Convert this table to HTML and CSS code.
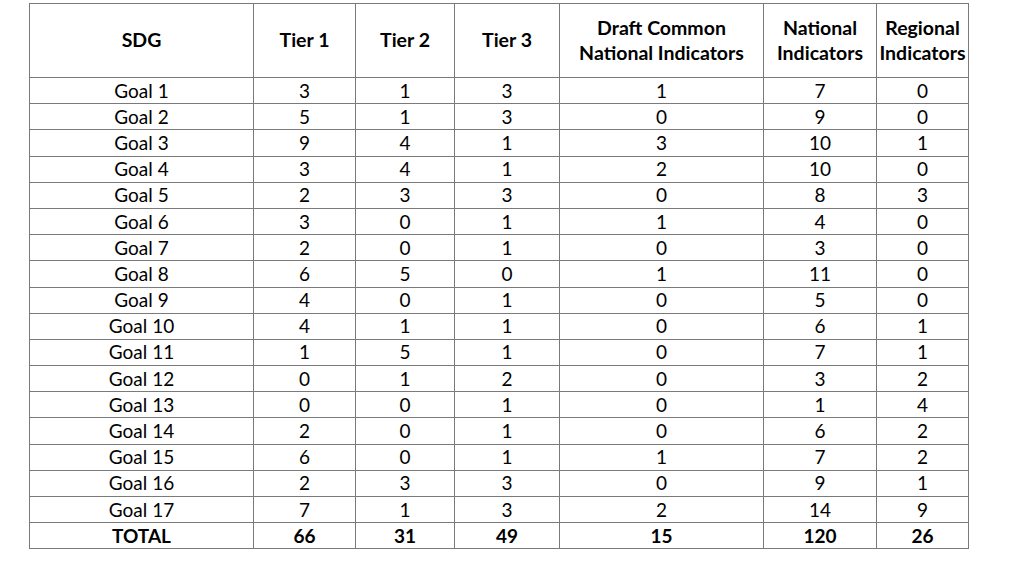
FILE: index.html
```html
<!DOCTYPE html>
<html>
<head>
<meta charset="utf-8">
<link rel="stylesheet" href="styles.css">
</head>
<body>
<table class="sdg">
<colgroup>
<col class="c1"><col class="c2"><col class="c3"><col class="c4"><col class="c5"><col class="c6"><col class="c7">
</colgroup>
<thead>
<tr class="head"><th>SDG</th><th>Tier 1</th><th>Tier 2</th><th>Tier 3</th><th>Draft Common<br>National Indicators</th><th>National<br>Indicators</th><th>Regional<br>Indicators</th></tr>
</thead>
<tbody>
<tr><td>Goal 1</td><td>3</td><td>1</td><td>3</td><td>1</td><td>7</td><td>0</td></tr>
<tr><td>Goal 2</td><td>5</td><td>1</td><td>3</td><td>0</td><td>9</td><td>0</td></tr>
<tr><td>Goal 3</td><td>9</td><td>4</td><td>1</td><td>3</td><td>10</td><td>1</td></tr>
<tr><td>Goal 4</td><td>3</td><td>4</td><td>1</td><td>2</td><td>10</td><td>0</td></tr>
<tr><td>Goal 5</td><td>2</td><td>3</td><td>3</td><td>0</td><td>8</td><td>3</td></tr>
<tr><td>Goal 6</td><td>3</td><td>0</td><td>1</td><td>1</td><td>4</td><td>0</td></tr>
<tr><td>Goal 7</td><td>2</td><td>0</td><td>1</td><td>0</td><td>3</td><td>0</td></tr>
<tr><td>Goal 8</td><td>6</td><td>5</td><td>0</td><td>1</td><td>11</td><td>0</td></tr>
<tr><td>Goal 9</td><td>4</td><td>0</td><td>1</td><td>0</td><td>5</td><td>0</td></tr>
<tr><td>Goal 10</td><td>4</td><td>1</td><td>1</td><td>0</td><td>6</td><td>1</td></tr>
<tr><td>Goal 11</td><td>1</td><td>5</td><td>1</td><td>0</td><td>7</td><td>1</td></tr>
<tr><td>Goal 12</td><td>0</td><td>1</td><td>2</td><td>0</td><td>3</td><td>2</td></tr>
<tr><td>Goal 13</td><td>0</td><td>0</td><td>1</td><td>0</td><td>1</td><td>4</td></tr>
<tr><td>Goal 14</td><td>2</td><td>0</td><td>1</td><td>0</td><td>6</td><td>2</td></tr>
<tr><td>Goal 15</td><td>6</td><td>0</td><td>1</td><td>1</td><td>7</td><td>2</td></tr>
<tr><td>Goal 16</td><td>2</td><td>3</td><td>3</td><td>0</td><td>9</td><td>1</td></tr>
<tr><td>Goal 17</td><td>7</td><td>1</td><td>3</td><td>2</td><td>14</td><td>9</td></tr>
<tr class="total"><td>TOTAL</td><td>66</td><td>31</td><td>49</td><td>15</td><td>120</td><td>26</td></tr>
</tbody>
</table>
</body>
</html>
```
FILE: styles.css
```css
html, body {
  margin: 0;
  padding: 0;
  background: #ffffff;
}
body {
  padding: 3px 0 0 29px;
  font-family: Lato, "Liberation Sans", sans-serif;
  color: #000;
}
.sdg {
  border-collapse: collapse;
  table-layout: fixed;
  width: 939px;
  font-size: 19px;
}
.c1 { width: 224px; }
.c2 { width: 102px; }
.c3 { width: 99px; }
.c4 { width: 105px; }
.c5 { width: 204px; }
.c6 { width: 113px; }
.c7 { width: 92px; }
.sdg th, .sdg td {
  border: 1px solid #7a7a7a;
  text-align: center;
  padding: 0;
  white-space: nowrap;
  overflow: visible;
}
.sdg th {
  font-weight: bold;
  font-size: 19.5px;
  line-height: 25px;
  padding-bottom: 2px;
}
.head {
  height: 74px;
}
.sdg tbody tr {
  height: 26.2px;
}
.sdg td {
  line-height: 24px;
}
.total td {
  font-weight: bold;
}
```
